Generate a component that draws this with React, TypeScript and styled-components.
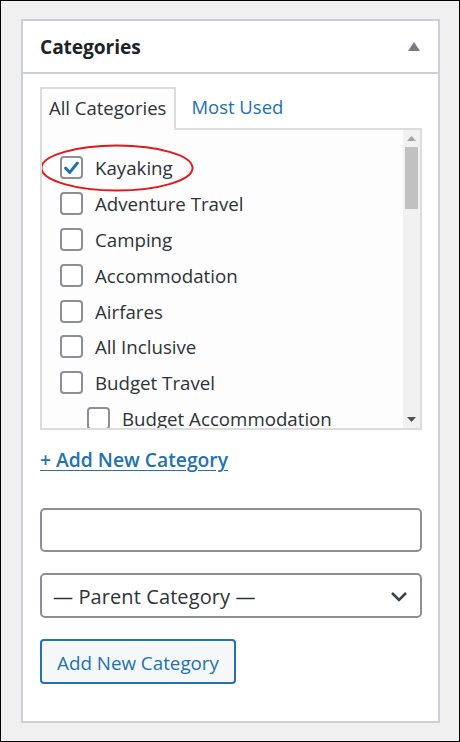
import React from "react";
import styled, { createGlobalStyle } from "styled-components";

const Global = createGlobalStyle`
  html, body { margin: 0; padding: 0; background: #f0f0f0; }
  * { box-sizing: border-box; }
  body { font-family: "Open Sans", "Noto Sans", sans-serif; }
`;

const Frame = styled.div`
  width: 460px;
  height: 742px;
  border: 1px solid #000;
  background: #f0f0f0;
  padding: 18px 20px 0 20px;
`;

const Panel = styled.div`
  width: 419px;
  height: 704px;
  background: #fff;
  border: 2px solid #ccd0d4;
  display: flex;
  flex-direction: column;
`;

const Header = styled.div`
  height: 53px;
  border-bottom: 2px solid #ccd0d4;
  display: flex;
  align-items: center;
  justify-content: space-between;
  padding: 0 18px 0 17px;
`;

const Title = styled.h2`
  margin: 0;
  font-size: 19.2px;
  font-weight: 700;
  color: #1d2327;
  letter-spacing: -0.1px;
`;

const Body = styled.div`
  padding: 13px 16px 0 17px;
  display: flex;
  flex-direction: column;
`;

const Tabs = styled.div`
  display: flex;
  align-items: flex-end;
  height: 41px;
`;

const Tab = styled.div<{ $active?: boolean }>`
  height: ${(p) => (p.$active ? "43px" : "41px")};
  margin-bottom: ${(p) => (p.$active ? "-2px" : "0")};
  padding: 0 8px 0 8px;
  display: flex;
  align-items: center;
  padding-bottom: ${(p) => (p.$active ? "4px" : "2px")};
  font-size: 18.5px;
  color: ${(p) => (p.$active ? "#2c3338" : "#2271b1")};
  background: ${(p) => (p.$active ? "#fdfdfd" : "transparent")};
  border: ${(p) => (p.$active ? "2px solid #dcdcde" : "none")};
  border-bottom: none;
  position: relative;
  z-index: 1;
  padding-left: ${(p) => (p.$active ? "7px" : "15px")};
`;

const ListBox = styled.div`
  height: 302px;
  border: 2px solid #dcdcde;
  background: #fdfdfd;
  display: flex;
  overflow: hidden;
`;

const List = styled.ul`
  list-style: none;
  margin: 0;
  padding: 20px 0 0 18px;
  flex: 1;
  display: flex;
  flex-direction: column;
  gap: 0;
`;

const Item = styled.li<{ $indent?: boolean }>`
  height: 35.8px;
  flex: none;
  display: flex;
  align-items: center;
  gap: 12px;
  padding-left: ${(p) => (p.$indent ? "27px" : "0")};
  font-size: 18.7px;
  color: #2c3338;
  position: relative;
`;

const Box = styled.span`
  width: 23px;
  height: 23px;
  border: 2px solid #8c8f94;
  border-radius: 4px;
  background: #fff;
  display: inline-flex;
  align-items: center;
  justify-content: center;
  flex: none;
`;

const Ellipse = styled.svg`
  position: absolute;
  left: -20px;
  top: -6px;
  pointer-events: none;
`;

const Scrollbar = styled.div`
  width: 17px;
  background: #f1f1f1;
  display: flex;
  flex-direction: column;
  align-items: center;
  flex: none;
`;

const ScrollArrow = styled.div`
  height: 17px;
  width: 17px;
  display: flex;
  align-items: center;
  justify-content: center;
`;

const Thumb = styled.div`
  width: 13px;
  height: 62px;
  background: #c1c1c1;
`;

const Spacer = styled.div`
  flex: 1;
`;

const AddLink = styled.a`
  margin-top: 17px;
  font-size: 19.3px;
  font-weight: 600;
  color: #2271b1;
  text-decoration: underline;
  text-underline-offset: 3px;
  width: fit-content;
  line-height: 26px;
`;

const TextInput = styled.div`
  margin-top: 35px;
  height: 44px;
  border: 2px solid #8c8f94;
  border-radius: 5px;
  background: #fff;
`;

const Select = styled.div`
  margin-top: 21px;
  height: 45px;
  border: 2px solid #8c8f94;
  border-radius: 5px;
  background: #fff;
  display: flex;
  align-items: center;
  justify-content: space-between;
  padding: 2px 12px 0 11px;
  font-size: 20px;
  letter-spacing: 0.1px;
  color: #2c3338;
`;

const Button = styled.div`
  margin-top: 21px;
  width: 196px;
  height: 45px;
  border: 2px solid #2271b1;
  border-radius: 4px;
  background: #f6f7f7;
  color: #2271b1;
  font-size: 18.8px;
  display: flex;
  align-items: center;
  justify-content: center;
  padding-top: 2px;
`;

const items: { label: string; checked?: boolean; indent?: boolean }[] = [
  { label: "Kayaking", checked: true },
  { label: "Adventure Travel" },
  { label: "Camping" },
  { label: "Accommodation" },
  { label: "Airfares" },
  { label: "All Inclusive" },
  { label: "Budget Travel" },
  { label: "Budget Accommodation", indent: true },
];

export default function App() {
  return (
    <>
      <Global />
      <Frame>
        <Panel>
          <Header>
            <Title>Categories</Title>
            <svg width="12" height="9" viewBox="0 0 12 9">
              <polygon points="6,0 12,9 0,9" fill="#787c82" />
            </svg>
          </Header>
          <Body>
            <Tabs>
              <Tab $active>All Categories</Tab>
              <Tab>Most Used</Tab>
            </Tabs>
            <ListBox>
              <List>
                {items.map((it) => (
                  <Item key={it.label} $indent={it.indent}>
                    <Box>
                      {it.checked && (
                        <svg width="20" height="20" viewBox="0 0 20 20">
                          <path
                            d="M3.8 10.2 L8.2 14.6 L16.2 4.8"
                            fill="none"
                            stroke="#2271b1"
                            strokeWidth="3.2"
                            strokeLinecap="round"
                            strokeLinejoin="round"
                          />
                        </svg>
                      )}
                    </Box>
                    {it.label}
                    {it.checked && (
                      <Ellipse width="154" height="48" viewBox="0 0 154 48">
                        <ellipse cx="77" cy="24" rx="75.5" ry="22.5" fill="none" stroke="#e3171b" strokeWidth="2" />
                      </Ellipse>
                    )}
                  </Item>
                ))}
              </List>
              <Scrollbar>
                <ScrollArrow>
                  <svg width="9" height="5" viewBox="0 0 9 5">
                    <polygon points="4.5,0 9,5 0,5" fill="#a3a3a3" />
                  </svg>
                </ScrollArrow>
                <Thumb />
                <Spacer />
                <ScrollArrow>
                  <svg width="9" height="5" viewBox="0 0 9 5">
                    <polygon points="0,0 9,0 4.5,5" fill="#505050" />
                  </svg>
                </ScrollArrow>
              </Scrollbar>
            </ListBox>
            <AddLink href="#">+ Add New Category</AddLink>
            <TextInput />
            <Select>
              <span>— Parent Category —</span>
              <svg width="18" height="11" viewBox="0 0 18 11">
                <path d="M2 2 L9 9 L16 2" fill="none" stroke="#3c434a" strokeWidth="2.6" />
              </svg>
            </Select>
            <Button>Add New Category</Button>
          </Body>
        </Panel>
      </Frame>
    </>
  );
}
